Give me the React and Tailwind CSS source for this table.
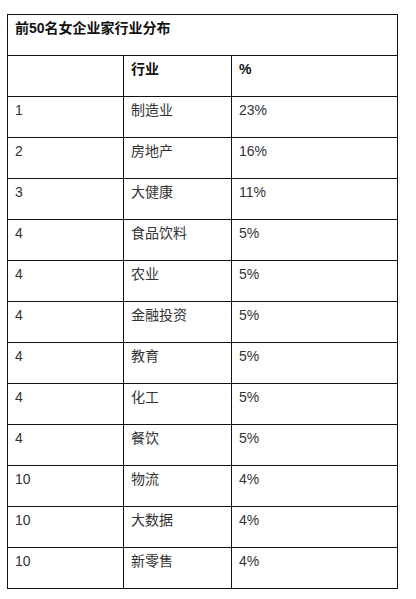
export default function App() {
  const rows = [
    ["1", "制造业", "23%"],
    ["2", "房地产", "16%"],
    ["3", "大健康", "11%"],
    ["4", "食品饮料", "5%"],
    ["4", "农业", "5%"],
    ["4", "金融投资", "5%"],
    ["4", "教育", "5%"],
    ["4", "化工", "5%"],
    ["4", "餐饮", "5%"],
    ["10", "物流", "4%"],
    ["10", "大数据", "4%"],
    ["10", "新零售", "4%"],
  ];
  const cell = "border border-[#111] align-top px-[7px] pt-[3px] h-[41px]";
  return (
    <div className="bg-white w-[416px] h-[599px] pt-[14px] pl-[7px] text-[14px] text-[#333] leading-[20px]" style={{ fontFamily: '"Liberation Sans", Arial, "Noto Sans CJK SC", sans-serif' }}>
      <table className="border-collapse w-[390px] table-fixed">
        <colgroup>
          <col className="w-[116px]" />
          <col className="w-[108px]" />
          <col className="w-[166px]" />
        </colgroup>
        <tbody>
          <tr>
            <td colSpan={3} className={cell + " font-bold text-[#111]"}>前50名女企业家行业分布</td>
          </tr>
          <tr>
            <td className={cell}></td>
            <td className={cell + " font-bold text-[#111]"}>行业</td>
            <td className={cell + " font-bold text-[#111]"}>%</td>
          </tr>
          {rows.map((r, i) => (
            <tr key={i}>
              <td className={cell}>{r[0]}</td>
              <td className={cell}>{r[1]}</td>
              <td className={cell}>{r[2]}</td>
            </tr>
          ))}
        </tbody>
      </table>
    </div>
  );
}
